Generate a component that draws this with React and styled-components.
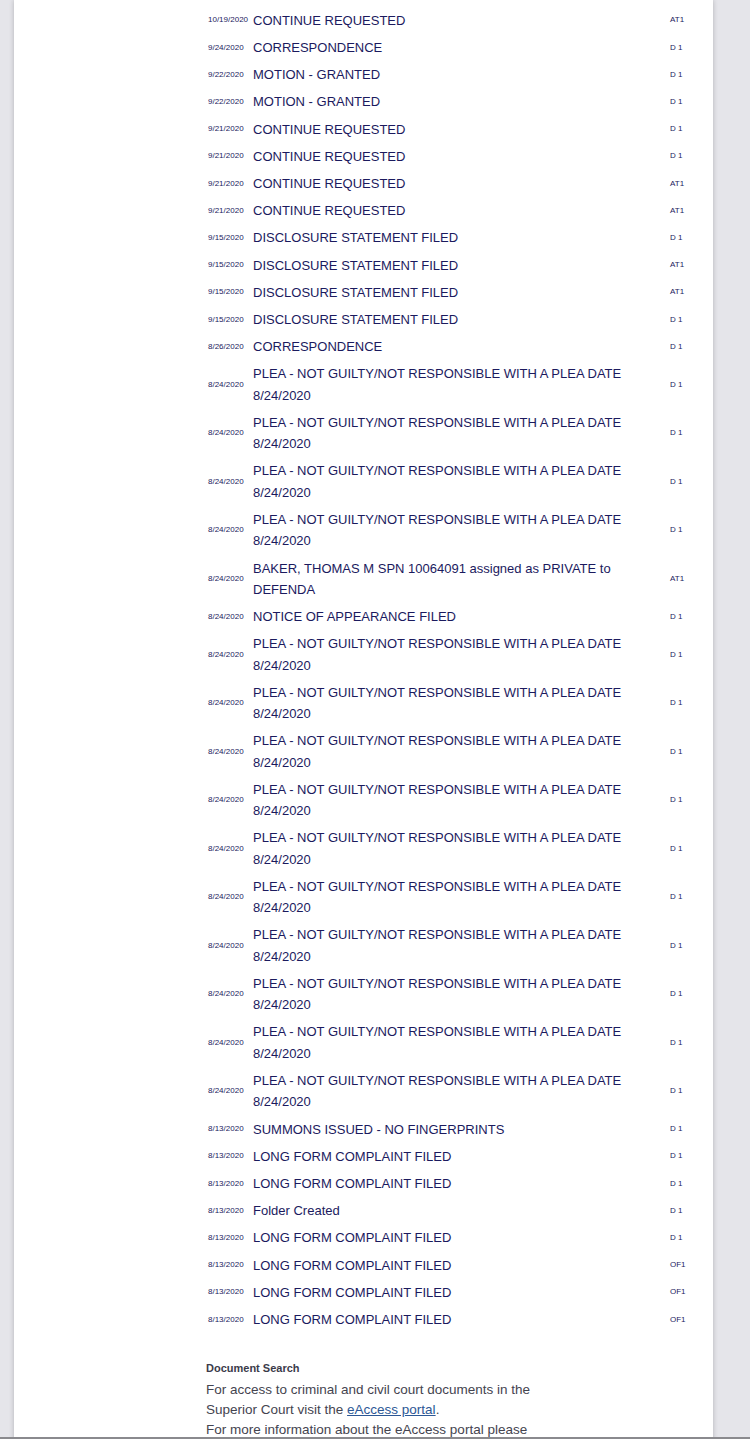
import React from "react";
import styled, { createGlobalStyle } from "styled-components";

const Global = createGlobalStyle`
  html, body { margin: 0; padding: 0; }
  body {
    background: #e5e5ea;
    font-family: "Liberation Sans", Arial, Helvetica, sans-serif;
    overflow: hidden;
  }
`;

const Screen = styled.div`
  height: 1439px;
  display: flex;
  flex-direction: column;
  overflow: hidden;
`;

const Stage = styled.div`
  flex: 1;
  min-height: 0;
  overflow: hidden;
  padding-left: 14px;
`;

const Panel = styled.main`
  width: 699px;
  min-height: 100%;
  background: #ffffff;
  box-shadow: 0 0 5px rgba(0, 0, 0, 0.22);
  padding: 6.8px 0 0 194px;
  box-sizing: border-box;
`;

const BottomBar = styled.div`
  height: 2px;
  background: #8a8a8e;
  flex-shrink: 0;
`;

const Docket = styled.div`
  display: flex;
  flex-direction: column;
`;

const Row = styled.div`
  display: grid;
  grid-template-columns: 45px 412px 1fr;
  align-items: center;
  padding: 2.94px 0;
  color: #1b1a5e;
`;

const DateCell = styled.span`
  font-size: 8px;
  line-height: 10px;
  white-space: nowrap;
`;

const Desc = styled.span`
  font-size: 13px;
  line-height: 21.33px;
`;

const Code = styled.span`
  font-size: 8px;
  line-height: 10px;
  padding-left: 5px;
  white-space: pre;
`;

const Info = styled.section`
  margin-top: 26.5px;
  margin-left: -2px;
  width: 335px;
`;

const InfoTitle = styled.h4`
  margin: 0;
  font-size: 11px;
  line-height: 16px;
  font-weight: 700;
  color: #3b3b4a;
`;

const InfoText = styled.p`
  margin: 3.8px 0 0;
  font-size: 13.5px;
  line-height: 20px;
  color: #44444f;
`;

const Link = styled.a`
  color: #2c5795;
  text-decoration: underline;
`;

const PLEA = "PLEA - NOT GUILTY/NOT RESPONSIBLE WITH A PLEA DATE 8/24/2020";

const entries = [
  ["10/19/2020", "CONTINUE REQUESTED", "AT1"],
  ["9/24/2020", "CORRESPONDENCE", "D 1"],
  ["9/22/2020", "MOTION - GRANTED", "D 1"],
  ["9/22/2020", "MOTION - GRANTED", "D 1"],
  ["9/21/2020", "CONTINUE REQUESTED", "D 1"],
  ["9/21/2020", "CONTINUE REQUESTED", "D 1"],
  ["9/21/2020", "CONTINUE REQUESTED", "AT1"],
  ["9/21/2020", "CONTINUE REQUESTED", "AT1"],
  ["9/15/2020", "DISCLOSURE STATEMENT FILED", "D 1"],
  ["9/15/2020", "DISCLOSURE STATEMENT FILED", "AT1"],
  ["9/15/2020", "DISCLOSURE STATEMENT FILED", "AT1"],
  ["9/15/2020", "DISCLOSURE STATEMENT FILED", "D 1"],
  ["8/26/2020", "CORRESPONDENCE", "D 1"],
  ["8/24/2020", PLEA, "D 1"],
  ["8/24/2020", PLEA, "D 1"],
  ["8/24/2020", PLEA, "D 1"],
  ["8/24/2020", PLEA, "D 1"],
  ["8/24/2020", "BAKER, THOMAS M SPN 10064091 assigned as PRIVATE to DEFENDA", "AT1"],
  ["8/24/2020", "NOTICE OF APPEARANCE FILED", "D 1"],
  ...Array.from({ length: 10 }, () => ["8/24/2020", PLEA, "D 1"]),
  ["8/13/2020", "SUMMONS ISSUED - NO FINGERPRINTS", "D 1"],
  ["8/13/2020", "LONG FORM COMPLAINT FILED", "D 1"],
  ["8/13/2020", "LONG FORM COMPLAINT FILED", "D 1"],
  ["8/13/2020", "Folder Created", "D 1"],
  ["8/13/2020", "LONG FORM COMPLAINT FILED", "D 1"],
  ["8/13/2020", "LONG FORM COMPLAINT FILED", "OF1"],
  ["8/13/2020", "LONG FORM COMPLAINT FILED", "OF1"],
  ["8/13/2020", "LONG FORM COMPLAINT FILED", "OF1"],
];

export default function App() {
  return (
    <Screen>
      <Global />
      <Stage>
        <Panel>
          <Docket>
            {entries.map(([date, desc, code], i) => (
              <Row key={i}>
                <DateCell>{date}</DateCell>
                <Desc>{desc}</Desc>
                <Code>{code}</Code>
              </Row>
            ))}
          </Docket>
          <Info>
            <InfoTitle>Document Search</InfoTitle>
            <InfoText>
              For access to criminal and civil court documents in the Superior Court visit the{" "}
              <Link href="#">eAccess portal</Link>.
              <br />
              For more information about the eAccess portal please visit the Clerk of the Superior Court website.
            </InfoText>
          </Info>
        </Panel>
      </Stage>
      <BottomBar />
    </Screen>
  );
}
